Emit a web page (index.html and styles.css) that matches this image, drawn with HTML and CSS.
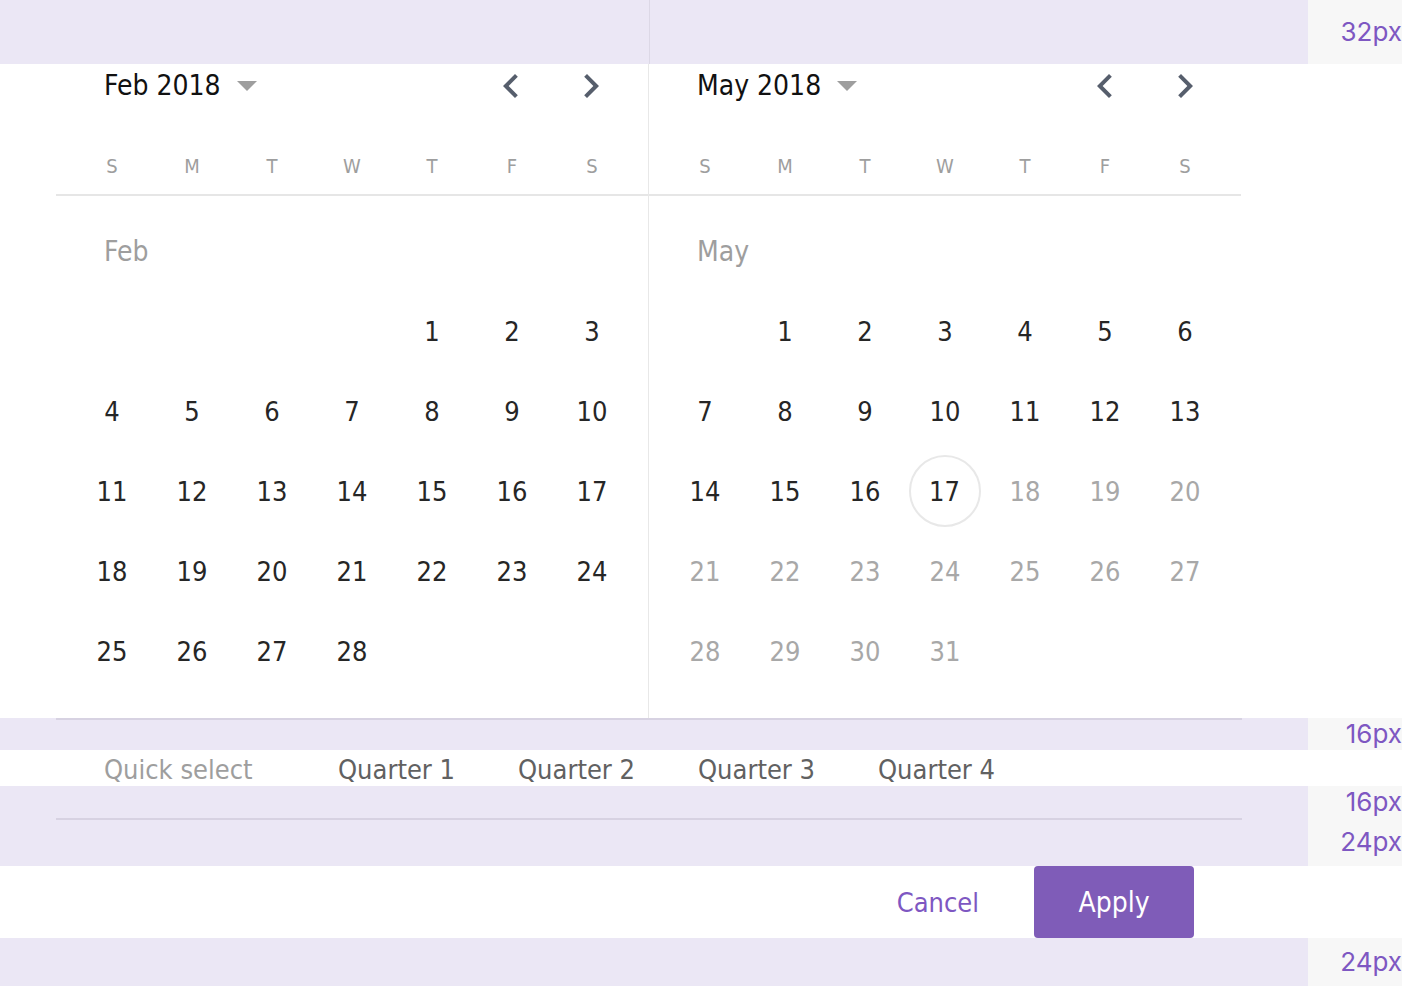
FILE: index.html
```html
<!DOCTYPE html>
<html>
<head>
<meta charset="utf-8">
<link rel="stylesheet" href="styles.css">
</head>
<body>
<div class="row band h64">
  <div class="main"><div class="split"></div></div>
  <div class="side">32px</div>
</div>

<div class="row">
  <div class="main calendar">
    <div class="pane pane-left">
      <div class="head">
        <span class="title">Feb 2018</span>
        <svg class="caret" width="20" height="10" viewBox="7 10 10 5"><path d="M7 10l5 5 5-5z"/></svg>
        <span class="grow"></span>
        <span class="nav"><svg width="48" height="48" viewBox="0 0 24 24"><path d="M15.41 7.41L14 6l-6 6 6 6 1.41-1.41L10.83 12z"/></svg></span>
        <span class="nav"><svg width="48" height="48" viewBox="0 0 24 24"><path d="M10 6L8.59 7.41 13.17 12l-4.58 4.59L10 18l6-6z"/></svg></span>
      </div>
      <div class="weekdays"><span>S</span><span>M</span><span>T</span><span>W</span><span>T</span><span>F</span><span>S</span></div>
      <div class="days">
        <div class="month">Feb</div>
        <span></span><span></span><span></span><span></span><span>1</span><span>2</span><span>3</span>
        <span>4</span><span>5</span><span>6</span><span>7</span><span>8</span><span>9</span><span>10</span>
        <span>11</span><span>12</span><span>13</span><span>14</span><span>15</span><span>16</span><span>17</span>
        <span>18</span><span>19</span><span>20</span><span>21</span><span>22</span><span>23</span><span>24</span>
        <span>25</span><span>26</span><span>27</span><span>28</span>
      </div>
    </div>
    <div class="pane">
      <div class="head">
        <span class="title">May 2018</span>
        <svg class="caret" width="20" height="10" viewBox="7 10 10 5"><path d="M7 10l5 5 5-5z"/></svg>
        <span class="grow"></span>
        <span class="nav"><svg width="48" height="48" viewBox="0 0 24 24"><path d="M15.41 7.41L14 6l-6 6 6 6 1.41-1.41L10.83 12z"/></svg></span>
        <span class="nav"><svg width="48" height="48" viewBox="0 0 24 24"><path d="M10 6L8.59 7.41 13.17 12l-4.58 4.59L10 18l6-6z"/></svg></span>
      </div>
      <div class="weekdays"><span>S</span><span>M</span><span>T</span><span>W</span><span>T</span><span>F</span><span>S</span></div>
      <div class="days">
        <div class="month">May</div>
        <span></span><span>1</span><span>2</span><span>3</span><span>4</span><span>5</span><span>6</span>
        <span>7</span><span>8</span><span>9</span><span>10</span><span>11</span><span>12</span><span>13</span>
        <span>14</span><span>15</span><span>16</span><span><b class="today">17</b></span><span class="off">18</span><span class="off">19</span><span class="off">20</span>
        <span class="off">21</span><span class="off">22</span><span class="off">23</span><span class="off">24</span><span class="off">25</span><span class="off">26</span><span class="off">27</span>
        <span class="off">28</span><span class="off">29</span><span class="off">30</span><span class="off">31</span>
      </div>
    </div>
  </div>
  <div class="side white"></div>
</div>

<div class="row band h32">
  <div class="main"><div class="rule"></div></div>
  <div class="side">16px</div>
</div>

<div class="row h36">
  <div class="main quick">
    <span class="quick-label">Quick select</span>
    <span class="quarter">Quarter 1</span>
    <span class="quarter">Quarter 2</span>
    <span class="quarter">Quarter 3</span>
    <span class="quarter">Quarter 4</span>
  </div>
  <div class="side white"></div>
</div>

<div class="row band h80">
  <div class="main"><div class="gap32"></div><div class="rule"></div></div>
  <div class="side stack"><span class="s32">16px</span><span class="s48">24px</span></div>
</div>

<div class="row h72">
  <div class="main actions">
    <span class="cancel">Cancel</span>
    <span class="apply">Apply</span>
  </div>
  <div class="side white"></div>
</div>

<div class="row band h48">
  <div class="main"></div>
  <div class="side">24px</div>
</div>
</body>
</html>
```

FILE: styles.css
```css
html, body {
  margin: 0;
  padding: 0;
  background: #ffffff;
}
body {
  font-family: "DejaVu Sans", sans-serif;
  font-stretch: condensed;
  width: 1402px;
  overflow: hidden;
}
.row {
  display: flex;
  width: 1402px;
}
.main {
  width: 1308px;
  flex: none;
}
.band .main {
  background: #ebe7f5;
}
.side {
  width: 94px;
  flex: none;
  background: #f7f7f7;
  color: #7e57c2;
  font-family: "Inter", sans-serif;
  font-stretch: normal;
  font-size: 26px;
  display: flex;
  align-items: center;
  justify-content: flex-end;
  box-sizing: border-box;
  padding-bottom: 2px;
}
.side.white {
  background: #ffffff;
}
.h64 { height: 64px; }
.h32 { height: 32px; }
.h36 { height: 36px; }
.h80 { height: 80px; }
.h72 { height: 72px; }
.h48 { height: 48px; }

.split {
  width: 650px;
  height: 64px;
  border-right: 1px solid #dcd8e6;
  box-sizing: border-box;
}

.calendar {
  display: flex;
  padding-left: 56px;
  box-sizing: border-box;
}
.pane {
  width: 592px;
  flex: none;
}
.pane-left {
  width: 593px;
  border-right: 1px solid #e8e8e8;
  box-sizing: border-box;
}
.pane-left .head,
.pane-left .weekdays,
.pane-left .days {
  padding-right: 17px;
}
.head {
  height: 43px;
  display: flex;
  align-items: center;
  padding: 0 16px;
}
.title {
  padding-left: 32px;
  font-size: 28px;
  color: #111111;
  line-height: 43px;
}
.caret {
  margin-left: 16px;
  fill: #9e9e9e;
}
.grow {
  flex: 1;
}
.nav {
  width: 80px;
  height: 43px;
  display: flex;
  align-items: center;
  justify-content: center;
}
.nav svg {
  fill: #565e6c;
}
.weekdays {
  margin-top: 31px;
  height: 56px;
  padding: 0 16px;
  display: grid;
  grid-template-columns: repeat(7, 80px);
  border-bottom: 2px solid #e6e6e6;
  font-size: 20px;
  color: #9e9e9e;
}
.weekdays span {
  display: flex;
  align-items: center;
  justify-content: center;
}
.days {
  padding: 16px 16px 26px;
  display: grid;
  grid-template-columns: repeat(7, 80px);
  grid-auto-rows: 80px;
  font-size: 27px;
  color: #262626;
}
.days span {
  display: flex;
  align-items: center;
  justify-content: center;
  padding-bottom: 2px;
  box-sizing: border-box;
}
.days .off {
  color: #a8a8a8;
}
.month {
  grid-column: 1 / span 7;
  padding-left: 32px;
  line-height: 80px;
  font-size: 28px;
  color: #9e9e9e;
}
.today {
  font-weight: normal;
  width: 72px;
  height: 72px;
  margin-left: -1px;
  border: 2px solid #e8e8e8;
  border-radius: 50%;
  box-sizing: border-box;
  display: flex;
  align-items: center;
  justify-content: center;
}

.rule {
  margin-left: 56px;
  width: 1186px;
  height: 2px;
  background: #d7d2e2;
}
.gap32 {
  height: 32px;
}
.side.stack {
  flex-direction: column;
  align-items: flex-end;
  justify-content: flex-start;
  padding-bottom: 0;
}
.s32 {
  height: 32px;
  display: flex;
  align-items: center;
  padding-bottom: 2px;
  box-sizing: border-box;
}
.s48 {
  height: 48px;
  display: flex;
  align-items: center;
  padding-bottom: 2px;
  box-sizing: border-box;
}

.quick {
  display: flex;
  align-items: center;
  padding-left: 104px;
  box-sizing: border-box;
  font-size: 27px;
  padding-top: 2px;
}
.quick-label {
  width: 234px;
  color: #9e9e9e;
}
.quarter {
  width: 180px;
  color: #616161;
}

.actions {
  display: flex;
  align-items: center;
  justify-content: flex-end;
  padding-right: 114px;
  box-sizing: border-box;
}
.cancel {
  color: #7e57c2;
  font-size: 27px;
  margin-right: 55px;
}
.apply {
  width: 160px;
  height: 72px;
  background: #7f5cb8;
  border-radius: 4px;
  color: #ffffff;
  font-size: 28px;
  display: flex;
  align-items: center;
  justify-content: center;
}
```
